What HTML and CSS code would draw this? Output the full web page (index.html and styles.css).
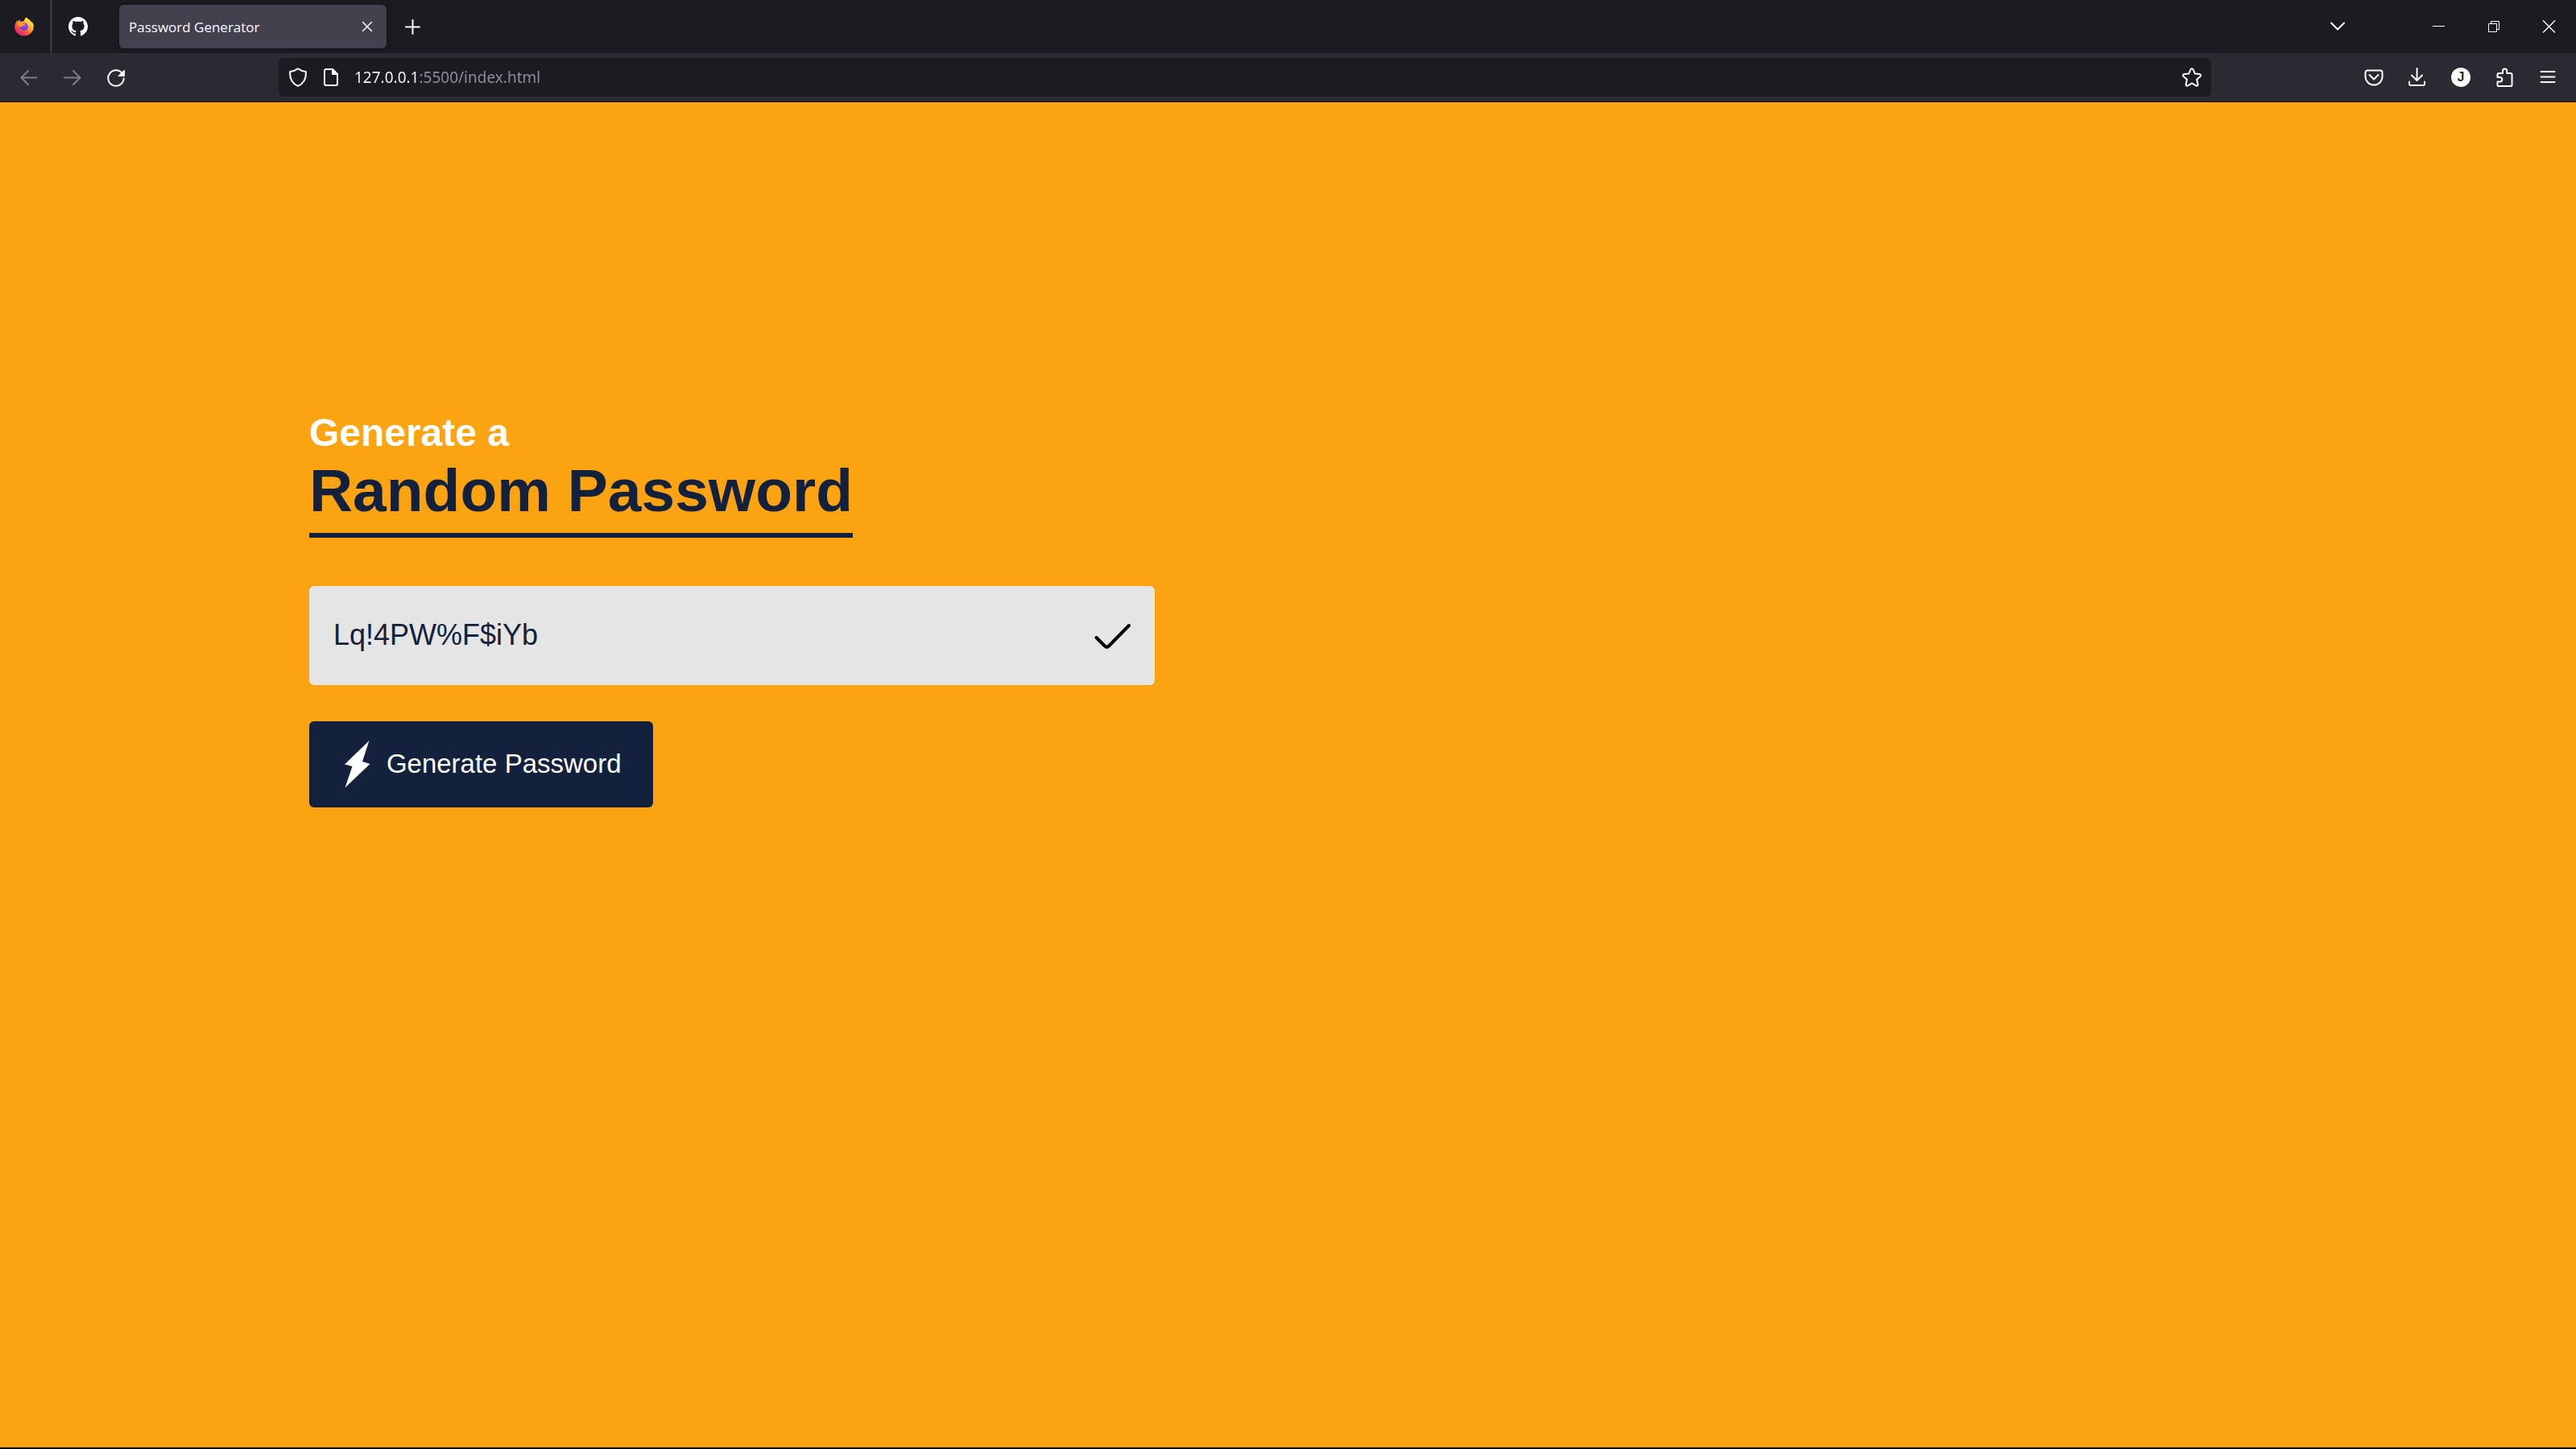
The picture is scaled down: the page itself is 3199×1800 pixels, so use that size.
FILE: index.html
```html
<!DOCTYPE html>
<html lang="en">
<head>
<meta charset="utf-8">
<meta name="viewport" content="width=device-width, initial-scale=1">
<title>Password Generator</title>
<link rel="stylesheet" href="styles.css">
</head>
<body>
<header class="browser">
  <div class="tab-strip">
    <button class="view-button" type="button" aria-label="Firefox View">
      <svg class="icon" viewBox="0 0 24 24">
        <defs>
          <linearGradient id="flame" x1="0.85" y1="0.1" x2="0.2" y2="0.95">
            <stop offset="0" stop-color="#fff44f"/><stop offset="0.35" stop-color="#ffb02e"/><stop offset="0.65" stop-color="#ff5a3c"/><stop offset="1" stop-color="#e31587"/>
          </linearGradient>
          <radialGradient id="globe" cx="0.6" cy="0.3" r="0.8">
            <stop offset="0" stop-color="#a346f5"/><stop offset="1" stop-color="#5a3fd0"/>
          </radialGradient>
        </defs>
        <path fill="url(#flame)" d="M14.600 0.400c-2 1.600-2.600 3.200-2.700 5-1.500-.2-2.700 0-3.800.8C7 5.700 6.600 4.800 6.700 3.500 5.600 4 4.700 5 4.200 5.900c-.5-.3-.6-.9-.5-1.700C1.500 6.500.2 9.300.2 12.400.2 18.700 5.500 23.600 12 23.600s11.800-5 11.800-11.300c0-2.700-1-5.300-2.600-7 .2 1 .2 1.500.1 2.200-.9-2.500-2-3.500-3.600-4.600-1.200-.8-2.200-1.500-3.100-2.500z"/>
        <circle cx="12" cy="12.200" r="5" fill="url(#globe)"/>
        <path fill="#ff9a2b" d="M3.500 8.200c2.500-1.500 5-1.700 7.500-.2 1 .5 2.200.5 2.500 1-.5 1.400-2.500 1.200-3.200 2-.8 1-1 1.700-2.800 1.500C5.500 12 4 10.500 3.500 8.200z"/>
      </svg>
    </button>
    <button class="pinned-tab" type="button" aria-label="GitHub">
      <svg class="icon" viewBox="0 0 16 16"><path fill="#fff" d="M8 0C3.580 0 0 3.580 0 8c0 3.540 2.290 6.530 5.470 7.590.4.070.55-.17.55-.38 0-.19-.01-.82-.01-1.490-2.010.37-2.530-.49-2.690-.94-.09-.23-.48-.94-.82-1.130-.28-.15-.68-.52-.01-.53.63-.01 1.080.58 1.230.82.72 1.210 1.870.87 2.330.66.07-.52.28-.87.51-1.070-1.780-.2-3.640-.89-3.640-3.950 0-.87.31-1.590.82-2.150-.08-.2-.36-1.020.08-2.120 0 0 .67-.21 2.200.82.64-.18 1.320-.27 2-.27s1.360.09 2 .27c1.530-1.040 2.200-.82 2.200-.82.44 1.100.16 1.920.08 2.120.51.56.82 1.270.82 2.150 0 3.070-1.870 3.750-3.650 3.950.29.25.54.73.54 1.480 0 1.070-.01 1.930-.01 2.200 0 .21.15.46.55.38A8.010 8.010 0 0 0 16 8c0-4.420-3.580-8-8-8z"/></svg>
    </button>
    <div class="tab">
      <span class="tab-title">Password Generator</span>
      <button class="tab-close" type="button" aria-label="Close tab">
        <svg class="icon line" viewBox="0 0 24 24"><path stroke-width="1.500" d="M6.500 6.500l11 11M17.500 6.500l-11 11"/></svg>
      </button>
    </div>
    <button class="tool" type="button" aria-label="New tab">
      <svg class="icon line" viewBox="0 0 24 24"><path d="M12.500 4v17M4 12.500h17"/></svg>
    </button>
    <div class="window-controls">
      <button class="tool list-tabs" type="button" aria-label="List all tabs">
        <svg class="icon line" viewBox="0 0 24 24"><path d="M4 7.500l8 8 8-8"/></svg>
      </button>
      <button class="window-button" type="button" aria-label="Minimize">
        <svg class="icon thin" viewBox="0 0 24 24"><path d="M4 11.500h15"/></svg>
      </button>
      <button class="window-button" type="button" aria-label="Restore">
        <svg class="icon thin" viewBox="0 0 24 24"><path d="M5.500 8.500h10v10h-10zM8.500 8.500v-3h10v10h-3"/></svg>
      </button>
      <button class="window-button" type="button" aria-label="Close window">
        <svg class="icon thin" viewBox="0 0 24 24"><path stroke-width="1.400" d="M5 4.500l15 15M20 4.500l-15 15"/></svg>
      </button>
    </div>
  </div>
  <nav class="toolbar">
    <button class="tool faded" type="button" aria-label="Back">
      <svg class="icon line" viewBox="0 0 24 24"><path d="M21.500 12.500H3M11 4l-8.500 8.500L11 21"/></svg>
    </button>
    <button class="tool faded" type="button" aria-label="Forward">
      <svg class="icon line" viewBox="0 0 24 24"><path d="M2 12.500h19M13 4l8.500 8.500L13 21"/></svg>
    </button>
    <button class="tool" type="button" aria-label="Reload">
      <svg class="icon line" viewBox="0 0 24 24"><path d="M20 7.500A9.700 9.700 0 1 0 21.700 13.500"/><path fill="#fbfbfe" stroke="none" d="M23 3.600v7.400h-7.600c-.6 0-.9-.7-.5-1.100l7-6.900c.4-.3 1.100 0 1.100.6z"/></svg>
    </button>
    <div class="url-bar">
      <svg class="icon line" viewBox="0 0 24 24"><path d="M12 1.200c3 2.300 6 3.400 9.800 3.700.6 7.300-1 14-9.800 18C3.200 18.900 1.600 12.200 2.200 4.900 6 4.600 9 3.500 12 1.200z"/></svg>
      <svg class="icon line" viewBox="0 0 24 24"><path d="M13.500 2H6a2 2 0 0 0-2 2v16a2 2 0 0 0 2 2h12a2 2 0 0 0 2-2V8.500z"/><path fill="#fbfbfe" d="M14 2v6h6z"/></svg>
      <input class="url" type="text" aria-label="Address" value="127.0.0.1:5500/index.html">
      <button class="bookmark" type="button" aria-label="Bookmark this page">
        <svg class="icon line" viewBox="0 0 24 24"><path d="M10.500 2.200c.6-1.400 2.400-1.400 3 0l2.300 5.300 5.700.6c1.500.2 2 1.900.9 2.900l-4.300 3.800 1.300 5.900c.3 1.500-1.200 2.500-2.400 1.700l-5-3-5 3c-1.200.8-2.700-.2-2.400-1.700l1.300-5.900L1.600 11c-1.100-1-.6-2.700.9-2.900l5.700-.6z"/></svg>
      </button>
    </div>
    <button class="tool" type="button" aria-label="Save to Pocket">
      <svg class="icon line" viewBox="0 0 24 24"><path d="M4 3.500h16a2.500 2.500 0 0 1 2.500 2.500v5a10.300 10.300 0 0 1-21 0V6A2.500 2.500 0 0 1 4 3.500z"/><path d="M6.500 9l5.500 5.500L17.500 9"/></svg>
    </button>
    <button class="tool" type="button" aria-label="Downloads">
      <svg class="icon line" viewBox="0 0 24 24"><path d="M11.500 1v15M5 9.500l6.500 6.500L18 9.500M2 17.500v2.500a2 2 0 0 0 2 2h15a2 2 0 0 0 2-2v-2.500"/></svg>
    </button>
    <button class="tool" type="button" aria-label="Account">
      <span class="avatar">J</span>
    </button>
    <button class="tool" type="button" aria-label="Extensions">
      <svg class="icon line" viewBox="0 0 24 24"><path d="M3.500 8.500a1.500 1.500 0 0 1 1.500-1.500h5V4a2.600 2.600 0 0 1 5.200 0v3h4.800a1.500 1.500 0 0 1 1.500 1.500v13a1.500 1.500 0 0 1-1.500 1.500H5a1.500 1.500 0 0 1-1.500-1.500v-4h3a2.800 2.800 0 0 0 0-5.600h-3z"/></svg>
    </button>
    <button class="tool" type="button" aria-label="Menu">
      <svg class="icon line" viewBox="0 0 24 24"><path d="M3.500 5h17M3.500 11.500h17M3.500 18h17"/></svg>
    </button>
  </nav>
</header>
<main class="page">
  <h1 class="title">Generate a<br><span class="title-strong">Random Password</span></h1>
  <div class="display">
    <input class="password" type="text" aria-label="Password" value="Lq!4PW%F$iYb" readonly>
    <button class="copy" type="button" aria-label="Copied">
      <svg class="copy-icon" viewBox="0 0 45 45"><path d="M2.500 25l10.500 10.500q2.500 2.500 5 0L43 10"/></svg>
    </button>
  </div>
  <button class="generate" type="button">
    <svg class="bolt" viewBox="0 0 60 60"><path d="M44.500 1L14 30.500l9.500 2.500L14.500 59.500 45.500 30 36 27z"/></svg>
    Generate Password
  </button>
</main>
</body>
</html>
```
FILE: styles.css
```css
* {
  box-sizing: border-box;
  margin: 0;
  padding: 0;
}

body {
  display: flex;
  flex-direction: column;
  min-height: 100vh;
  background: #fca311;
  font-family: "Liberation Sans", Arial, sans-serif;
}

button,
input {
  border: 0;
  outline: 0;
  background: transparent;
  color: inherit;
  font: inherit;
}

button {
  display: flex;
  align-items: center;
  justify-content: center;
  cursor: pointer;
}

/* Browser window */

.browser {
  border-bottom: 1px solid #0c0c0d;
  background: #2b2a33;
  color: #fbfbfe;
  font-family: "Open Sans", "Noto Sans", sans-serif;
}

.tab-strip {
  display: flex;
  align-items: center;
  height: 66px;
  background: #1c1b22;
}

.icon {
  flex: none;
  display: block;
  width: 24px;
  height: 24px;
}

.line {
  fill: none;
  stroke: #fbfbfe;
  stroke-width: 2;
  stroke-linecap: round;
  stroke-linejoin: round;
}

.thin {
  fill: none;
  stroke: #fff;
  stroke-width: 1;
}

.view-button {
  width: 64px;
  height: 66px;
  padding-right: 3px;
  border-right: 1px solid #5b5a61;
}

.pinned-tab {
  width: 66px;
  height: 54px;
}

.tab {
  display: flex;
  align-items: center;
  justify-content: space-between;
  width: 332px;
  height: 54px;
  margin: 0 5px 0 18px;
  padding: 0 12px;
  border-radius: 6px;
  background: #42414d;
  box-shadow: 0 0 6px rgba(0, 0, 0, 0.4);
}

.tab-title {
  font-size: 17px;
}

.tool {
  flex: none;
  width: 54px;
  height: 48px;
}

.faded {
  opacity: 0.4;
}

.window-controls {
  display: flex;
  margin-left: auto;
}

.list-tabs {
  margin-right: 65px;
}

.window-button {
  width: 68px;
  height: 48px;
}

.toolbar {
  display: flex;
  align-items: center;
  height: 60px;
  padding: 0 8px 0 9px;
}

.url-bar {
  display: flex;
  flex: 1;
  align-items: center;
  gap: 17px;
  min-width: 0;
  height: 48px;
  margin: 0 5.5%;
  padding: 0 12px;
  border-radius: 6px;
  background: #1c1b22;
}

/* The host is bright, the port and path are dimmed */
.url {
  flex: 1;
  min-width: 0;
  background: linear-gradient(to right, #fbfbfe 79px, #8f8f9d 79px);
  background-clip: text;
  -webkit-text-fill-color: transparent;
  font-family: "Noto Sans", "Open Sans", sans-serif;
  font-size: 19px;
}

.avatar {
  width: 24px;
  height: 24px;
  border-radius: 50%;
  background: #fbfbfe;
  color: #2b2a33;
  font-family: "Liberation Sans", Arial, sans-serif;
  font-size: 16px;
  font-weight: 700;
  line-height: 24px;
  text-align: center;
}

/* Password generator */

.page {
  flex: 1;
  padding: 12% 12% 60px;
  border-bottom: 2px solid #000;
}

.title {
  color: #fff;
  font-size: 48px;
  line-height: 54px;
}

.title-strong {
  display: inline-block;
  padding-bottom: 9px;
  border-bottom: 6px solid #14213d;
  color: #14213d;
  font-size: 75px;
  line-height: 88px;
}

.display {
  display: flex;
  align-items: center;
  justify-content: space-between;
  max-width: 1050px;
  height: 123px;
  margin: 60px 0 45px;
  padding: 0 30px;
  border-radius: 6px;
  background: #e5e5e5;
}

.password {
  flex: 1;
  min-width: 0;
  height: 42px;
  color: #14213d;
  font-size: 36px;
}

.copy-icon {
  display: block;
  width: 45px;
  height: 45px;
  fill: none;
  stroke: #000;
  stroke-width: 4;
  stroke-linecap: round;
}

.generate {
  gap: 6px;
  height: 107px;
  padding: 0 39px 0 30px;
  border-radius: 6px;
  background: #14213d;
  color: #fff;
  font-size: 33px;
}

.bolt {
  width: 60px;
  height: 60px;
  fill: #fff;
}
```
